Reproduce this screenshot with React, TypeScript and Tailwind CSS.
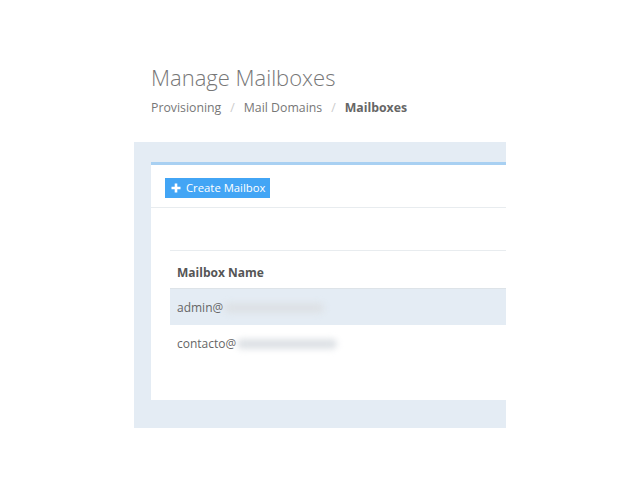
import React from "react";

const Redacted = ({ w }: { w: number }) => (
  <span
    className="inline-block h-[10px] rounded-full bg-[#dde1e5] blur-[3px] align-middle ml-[1px]"
    style={{ width: w }}
  />
);

export default function App() {
  return (
    <div className="w-[640px] h-[480px] bg-white overflow-hidden" style={{ fontFamily: '"Open Sans", sans-serif' }}>
      <div className="pl-[151px] pt-[62px]">
        <h1 className="text-[22px] leading-[30px] font-light text-[#777]">Manage Mailboxes</h1>
        <div className="mt-[7px] flex items-center text-[12.3px] leading-[18px] text-[#777]">
          <span>Provisioning</span>
          <span className="mx-[9px] text-[#ccc]">/</span>
          <span>Mail Domains</span>
          <span className="mx-[9px] text-[#ccc]">/</span>
          <span className="font-bold text-[#666]">Mailboxes</span>
        </div>
      </div>
      <div className="ml-[134px] mt-[25px] w-[372px] h-[286px] bg-[#e4ecf4] pl-[17px] pt-[20px]">
        <div className="h-[238px] bg-white border-t-[3px] border-[#a8d0f2]">
          <div className="pl-[14px] pt-[13px] pb-[9px] border-b border-[#e8ecef]">
            <button className="flex items-center h-[20px] pl-[6px] pr-[5px] bg-[#42a5f5] text-white text-[11.3px] leading-[20px]">
              <svg width="10" height="10" viewBox="0 0 10 10" className="mr-[5px]">
                <path d="M5 0.5v9M0.5 5h9" stroke="white" strokeWidth="2.6" />
              </svg>
              Create Mailbox
            </button>
          </div>
          <div className="pl-[19px] pt-[42px]">
            <div className="border-t border-[#e8ecef]">
              <div className="h-[38px] flex items-center pl-[7px] text-[12px] font-bold text-[#555] border-b border-[#dde3e8] pt-[6px]">
                Mailbox Name
              </div>
              <div className="h-[36px] flex items-center pl-[7px] pt-[2px] text-[12px] text-[#666] bg-[#e4ecf4]">
                admin@<Redacted w={100} />
              </div>
              <div className="h-[36px] flex items-center pl-[7px] pt-[2px] text-[12px] text-[#666]">
                contacto@<Redacted w={100} />
              </div>
            </div>
          </div>
        </div>
      </div>
    </div>
  );
}
